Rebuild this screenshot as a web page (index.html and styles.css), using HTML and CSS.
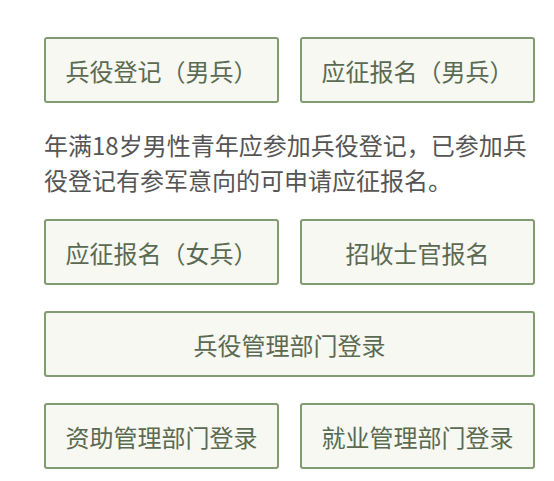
FILE: index.html
```html
<!DOCTYPE html>
<html lang="zh-CN">
<head>
    <meta charset="UTF-8">
    <meta name="viewport" content="width=device-width, initial-scale=1.0">
    <title>兵役登记</title>
    <link rel="stylesheet" href="styles.css">
</head>
<body>
    <div class="entry">
        <div class="btn-row">
            <a class="entry-btn" href="#">兵役登记（男兵）</a>
            <a class="entry-btn" href="#">应征报名（男兵）</a>
        </div>
        <p class="tip">年满18岁男性青年应参加兵役登记，已参加兵役登记有参军意向的可申请应征报名。</p>
        <div class="btn-row">
            <a class="entry-btn" href="#">应征报名（女兵）</a>
            <a class="entry-btn" href="#">招收士官报名</a>
        </div>
        <div class="btn-row single">
            <a class="entry-btn" href="#">兵役管理部门登录</a>
        </div>
        <div class="btn-row">
            <a class="entry-btn" href="#">资助管理部门登录</a>
            <a class="entry-btn" href="#">就业管理部门登录</a>
        </div>
    </div>
</body>
</html>
```

FILE: styles.css
```css
body {
    margin: 0;
    background: #fff;
    font-family: "Noto Sans CJK SC", "Microsoft YaHei", sans-serif;
}
.entry {
    padding: 37px 19px 0 44px;
}
.btn-row {
    display: grid;
    grid-template-columns: 1fr 1fr;
    gap: 21px;
    margin-bottom: 26px;
}
.btn-row:last-child {
    margin-bottom: 0;
}
.btn-row.single {
    grid-template-columns: 1fr;
}
.entry-btn {
    display: flex;
    align-items: center;
    justify-content: center;
    height: 62px;
    background: #f6f8f1;
    border: 2px solid #819c72;
    border-radius: 3px;
    color: #5b6a52;
    font-size: 24px;
    text-decoration: none;
}
.tip {
    margin: -2px 0 22px;
    font-size: 24px;
    line-height: 35px;
    color: #555;
}
```
